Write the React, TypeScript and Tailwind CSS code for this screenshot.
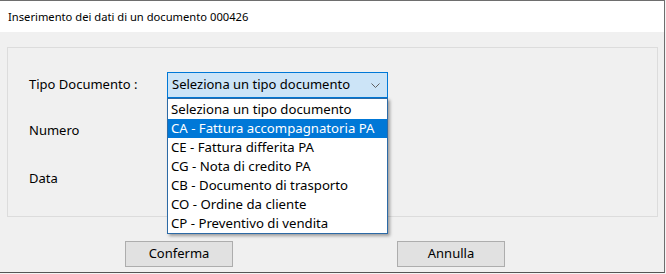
import React from "react";

const items = [
  "Seleziona un tipo documento",
  "CA - Fattura accompagnatoria PA",
  "CE - Fattura differita PA",
  "CG - Nota di credito PA",
  "CB - Documento di trasporto",
  "CO - Ordine da cliente",
  "CP - Preventivo di vendita",
];

export default function App() {
  return (
    <div
      className="relative w-[666px] h-[274px] overflow-hidden bg-[#f4f4f4] text-black"
      style={{ fontFamily: '"Noto Sans", "Open Sans", sans-serif' }}
    >
      <div className="flex h-[273px] w-[665px] flex-col border-r border-[#6e6e6e] border-b border-b-[#555]">
        <div className="h-px bg-[#6e6e6e]" />
        {/* title */}
        <div className="flex h-[31px] items-center bg-white pl-[8px] text-[11.2px] leading-none">
          Inserimento dei dati di un documento 000426
        </div>
        {/* body */}
        <div className="flex flex-1 flex-col bg-[#f0f0f0] pl-[7px] pt-[15px]">
          <div className="flex h-[170px] w-[651px] flex-col border border-[#dcdcdc] pl-[21px] pt-[24px] text-[13px]">
            <div className="flex h-[26px] items-center">
              <div className="w-[138px]">Tipo Documento :</div>
              <div className="flex h-[26px] w-[221px] items-center justify-between border border-[#0078d7] bg-[#cce4f7] pl-[4px] pr-[7px]">
                <span>Seleziona un tipo documento</span>
                <svg width="9" height="5" viewBox="0 0 9 5">
                  <path d="M0.5 0.5 L4.5 4.5 L8.5 0.5" fill="none" stroke="#606060" strokeWidth="1" />
                </svg>
              </div>
            </div>
            <div className="mt-[20px] flex h-[26px] items-center">Numero</div>
            <div className="mt-[22px] flex h-[26px] items-center">Data</div>
          </div>
          <div className="flex h-[26px] mt-[24px] text-[13px]">
            <button className="ml-[118px] flex h-[26px] w-[108px] items-center justify-center border border-[#adadad] bg-[#e1e1e1]">
              Conferma
            </button>
            <button className="ml-[164px] flex h-[26px] w-[108px] items-center justify-center border border-[#adadad] bg-[#e1e1e1]">
              Annulla
            </button>
          </div>
        </div>
      </div>
      {/* dropdown list overlay */}
      <div className="absolute left-[167px] top-[98px] w-[221px] border border-[#2c6aa6] bg-white pt-px text-[13.2px] shadow-[2px_2px_3px_rgba(0,0,0,0.35)]">
        {items.map((t, i) => (
          <div
            key={t}
            className={
              i === 1
                ? "flex h-[19px] items-center bg-[#0078d7] pl-[3px] text-white"
                : "flex h-[19px] items-center pl-[3px]"
            }
          >
            {t}
          </div>
        ))}
      </div>
    </div>
  );
}
